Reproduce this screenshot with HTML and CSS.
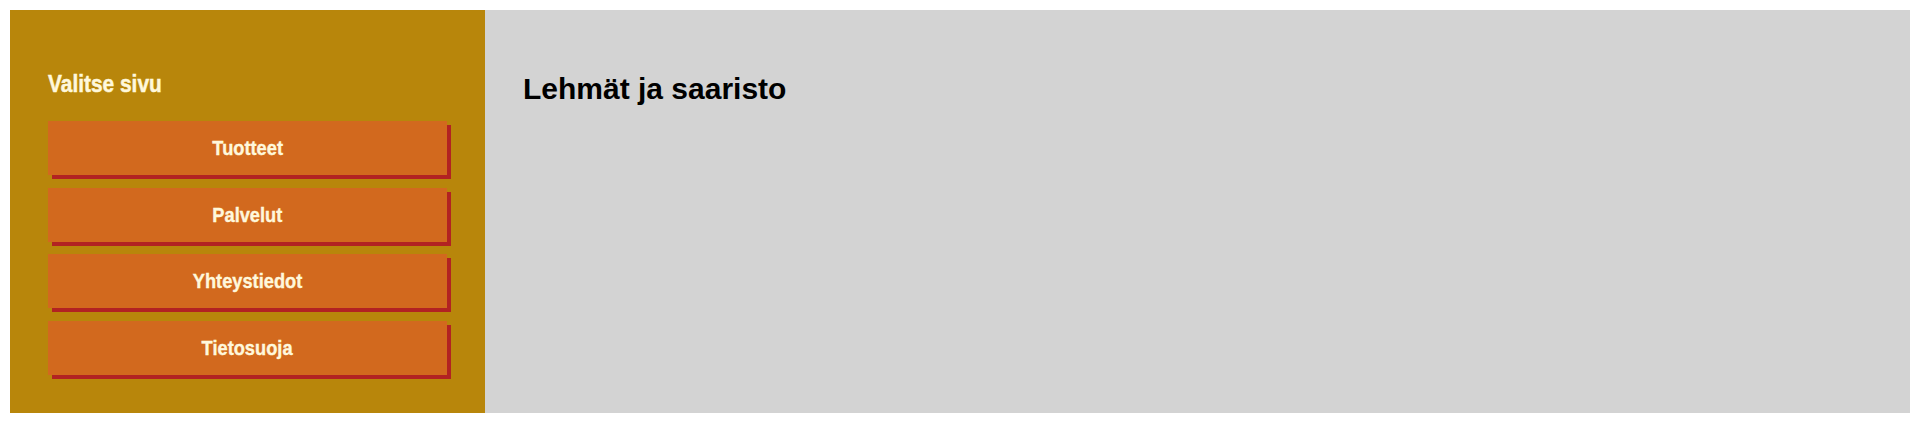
FILE: index.html
```html
<!DOCTYPE html>
<html lang="fi">
<head>
<meta charset="utf-8">
<title>Lehmät ja saaristo</title>
<link rel="stylesheet" href="styles.css">
</head>
<body>
<div class="layout">
  <nav class="sidebar">
    <h2 class="nav-title"><span class="narrow-left">Valitse sivu</span></h2>
    <a class="nav-btn" href="#"><span class="narrow">Tuotteet</span></a>
    <a class="nav-btn" href="#"><span class="narrow">Palvelut</span></a>
    <a class="nav-btn" href="#"><span class="narrow">Yhteystiedot</span></a>
    <a class="nav-btn" href="#"><span class="narrow">Tietosuoja</span></a>
  </nav>
  <main class="content">
    <h1 class="page-title">Lehmät ja saaristo</h1>
  </main>
</div>
</body>
</html>
```
FILE: styles.css
```css
html, body {
  margin: 0;
  padding: 0;
  background: #ffffff;
}
body {
  margin: 10px;
}
.layout {
  display: flex;
  height: 95vh;
}
.sidebar {
  width: 25%;
  box-sizing: border-box;
  background: #B8860B;
  padding: 38px;
}
.nav-title {
  margin: 22px 0 23px 0;
  font-family: "Liberation Sans", Arial, sans-serif;
  font-weight: bold;
  font-size: 24px;
  line-height: 28px;
  color: #FFF8DC;
  -webkit-text-stroke: 0.5px #FFF8DC;
}
.narrow-left {
  display: inline-block;
  transform: scaleX(0.87);
  transform-origin: left center;
}
.narrow {
  display: inline-block;
  transform: scaleX(0.89);
  transform-origin: center center;
}
.nav-btn {
  display: flex;
  align-items: center;
  justify-content: center;
  height: 54px;
  margin-bottom: 12.6px;
  background: #D2691E;
  box-shadow: 4px 4px 0 #B22222;
  color: #FFF8DC;
  text-decoration: none;
  font-family: "Liberation Sans", Arial, sans-serif;
  font-weight: bold;
  font-size: 20.5px;
  -webkit-text-stroke: 0.4px #FFF8DC;
}
.content {
  flex: 1;
  background: #D3D3D3;
  padding: 38px;
}
.page-title {
  margin: 23px 0 0 0;
  font-family: "Liberation Sans", Arial, sans-serif;
  font-weight: bold;
  font-size: 30px;
  line-height: 36px;
  color: #000000;
}
```
